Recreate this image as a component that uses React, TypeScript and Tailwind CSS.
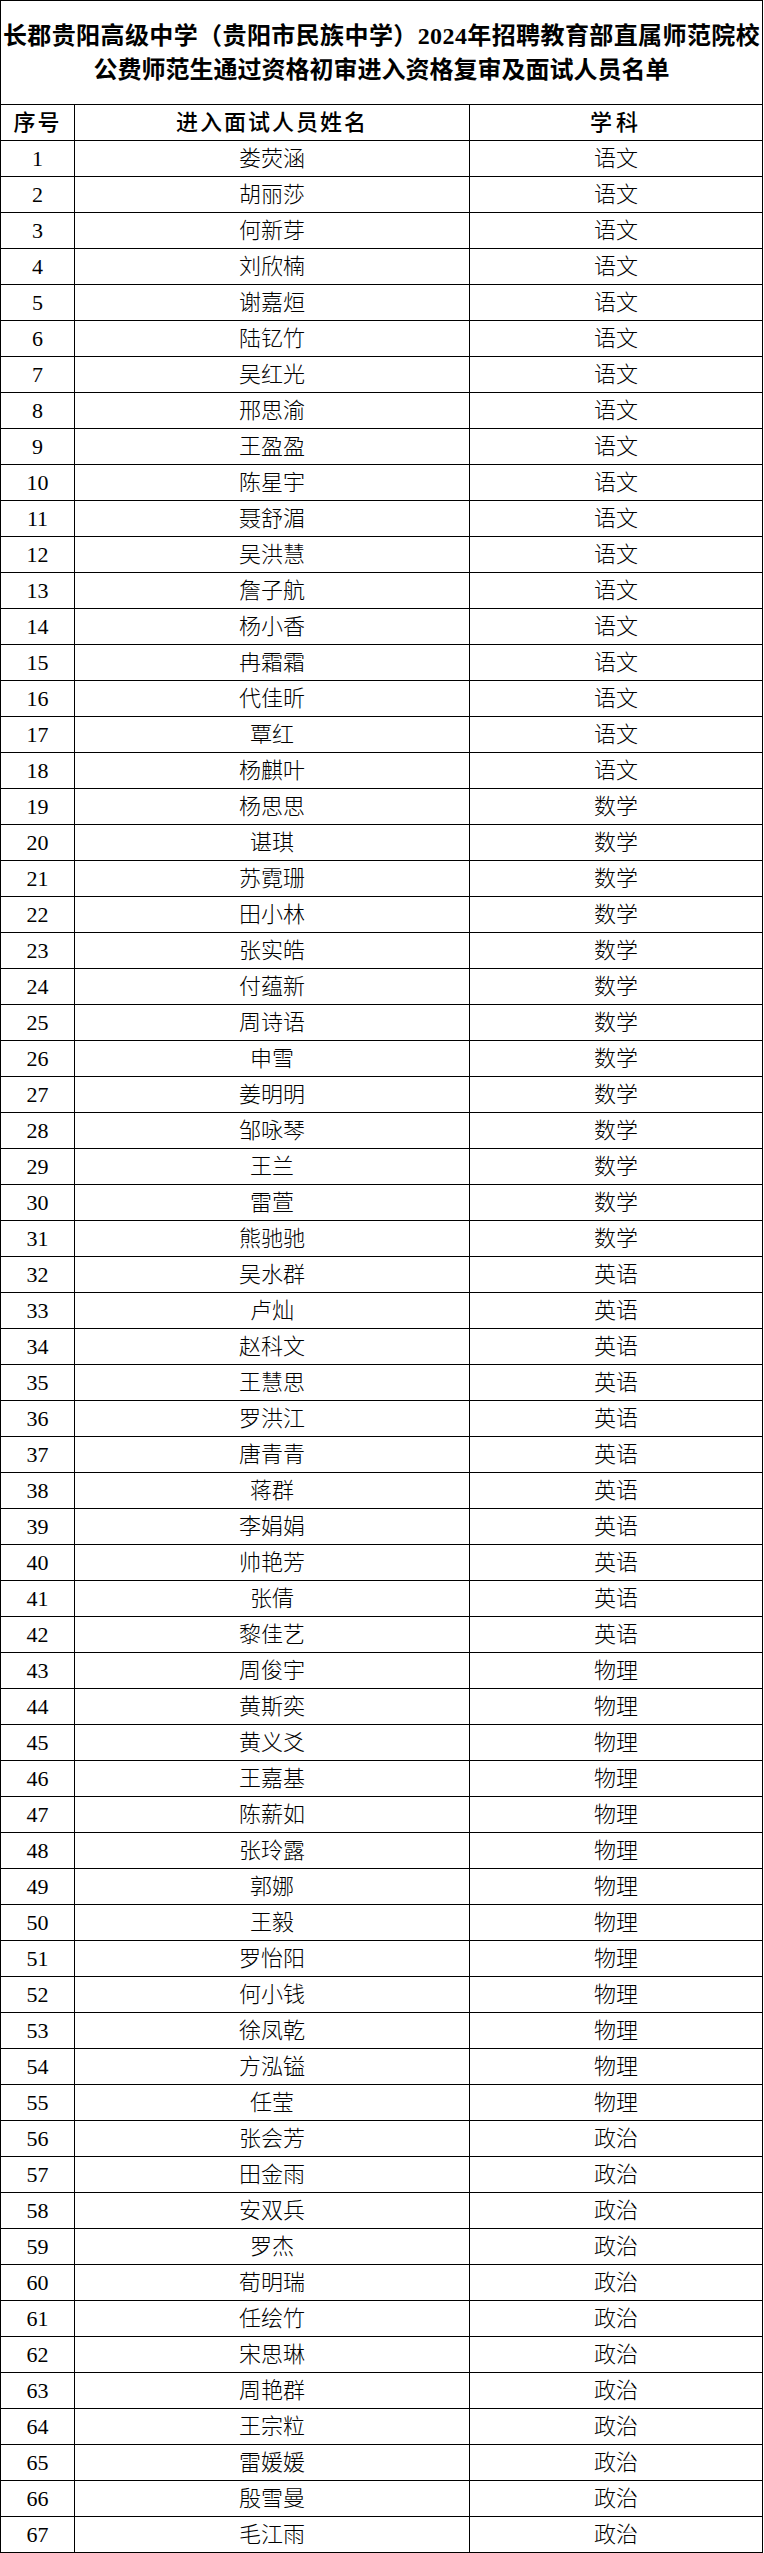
const rows: [string, string][] = [
  ["娄荧涵", "语文"],
  ["胡丽莎", "语文"],
  ["何新芽", "语文"],
  ["刘欣楠", "语文"],
  ["谢嘉烜", "语文"],
  ["陆钇竹", "语文"],
  ["吴红光", "语文"],
  ["邢思渝", "语文"],
  ["王盈盈", "语文"],
  ["陈星宇", "语文"],
  ["聂舒湄", "语文"],
  ["吴洪慧", "语文"],
  ["詹子航", "语文"],
  ["杨小香", "语文"],
  ["冉霜霜", "语文"],
  ["代佳昕", "语文"],
  ["覃红", "语文"],
  ["杨麒叶", "语文"],
  ["杨思思", "数学"],
  ["谌琪", "数学"],
  ["苏霓珊", "数学"],
  ["田小林", "数学"],
  ["张实皓", "数学"],
  ["付蕴新", "数学"],
  ["周诗语", "数学"],
  ["申雪", "数学"],
  ["姜明明", "数学"],
  ["邹咏琴", "数学"],
  ["王兰", "数学"],
  ["雷萱", "数学"],
  ["熊驰驰", "数学"],
  ["吴水群", "英语"],
  ["卢灿", "英语"],
  ["赵科文", "英语"],
  ["王慧思", "英语"],
  ["罗洪江", "英语"],
  ["唐青青", "英语"],
  ["蒋群", "英语"],
  ["李娟娟", "英语"],
  ["帅艳芳", "英语"],
  ["张倩", "英语"],
  ["黎佳艺", "英语"],
  ["周俊宇", "物理"],
  ["黄斯奕", "物理"],
  ["黄义爻", "物理"],
  ["王嘉基", "物理"],
  ["陈薪如", "物理"],
  ["张玲露", "物理"],
  ["郭娜", "物理"],
  ["王毅", "物理"],
  ["罗怡阳", "物理"],
  ["何小钱", "物理"],
  ["徐凤乾", "物理"],
  ["方泓镒", "物理"],
  ["任莹", "物理"],
  ["张会芳", "政治"],
  ["田金雨", "政治"],
  ["安双兵", "政治"],
  ["罗杰", "政治"],
  ["荀明瑞", "政治"],
  ["任绘竹", "政治"],
  ["宋思琳", "政治"],
  ["周艳群", "政治"],
  ["王宗粒", "政治"],
  ["雷媛媛", "政治"],
  ["殷雪曼", "政治"],
  ["毛江雨", "政治"],
];

const App = () => {
  return (
    <div className="bg-white w-[764px] min-h-[2553px] font-['Liberation_Serif','Noto_Sans_CJK_SC',serif] text-black">
      <div className="w-[763px] border-l border-r border-black">
        {/* title */}
        <div className="h-[105px] border-t border-b border-black flex flex-col items-center justify-center text-[24px] leading-[34px] font-bold whitespace-nowrap">
          <div className="tracking-[0.4px]">长郡贵阳高级中学（贵阳市民族中学）2024年招聘教育部直属师范院校</div>
          <div>公费师范生通过资格初审进入资格复审及面试人员名单</div>
        </div>

        {/* header */}
        <div className="h-[36px] border-b border-black flex text-[22px] font-medium">
          <div className="w-[74px] border-r border-black flex items-center justify-center tracking-[2px]">
            序号
          </div>
          <div className="w-[395px] border-r border-black flex items-center justify-center tracking-[2px]">
            进入面试人员姓名
          </div>
          <div className="flex-1 flex items-center justify-center tracking-[4px]">学科</div>
        </div>

        {rows.map(([name, subject], i) => (
          <div key={i} className="h-[36px] border-b border-black flex text-[22px] font-light">
            <div className="w-[74px] border-r border-black flex items-center justify-center">
              {i + 1}
            </div>
            <div className="w-[395px] border-r border-black flex items-center justify-center">
              {name}
            </div>
            <div className="flex-1 flex items-center justify-center">{subject}</div>
          </div>
        ))}
      </div>
    </div>
  );
};

export default App;
